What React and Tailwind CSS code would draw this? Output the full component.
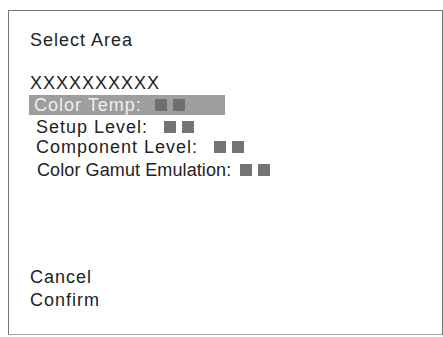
import React from "react";

const Squares = ({ dark }) => (
  <span className="inline-flex gap-[6px]">
    <span className={`inline-block w-[12px] h-[12px] ${dark ? "bg-[#6e6e6e]" : "bg-[#747474]"}`}></span>
    <span className={`inline-block w-[12px] h-[12px] ${dark ? "bg-[#6e6e6e]" : "bg-[#747474]"}`}></span>
  </span>
);

const App = () => {
  return (
    <div className="w-[443px] h-[337px] bg-white pt-[10px] pl-[8px] overflow-hidden font-['Liberation_Sans',Arial,sans-serif] text-[18px] tracking-[1px] text-[#222]">
      <div className="w-[435px] h-[325px] border border-[#777] border-b-[#aaa] pl-[21px] pt-[18px]">
        {/* Title */}
        <div className="h-[22px] leading-[22px]">Select Area</div>

        {/* Area name */}
        <div className="mt-[21px] h-[22px] leading-[22px]">XXXXXXXXXX</div>

        {/* Selected item */}
        <div className="mt-px w-[196px] h-[20px] leading-[20px] bg-[#9e9e9e] text-[#eeeeee] pl-[5px] -ml-px">
          Color Temp:<span className="ml-[13px]"><Squares dark /></span>
        </div>

        <div className="mt-[2px] pl-[6px] h-[20px] leading-[20px]">
          Setup Level:<span className="ml-[16px]"><Squares /></span>
        </div>
        <div className="pl-[6px] h-[20px] leading-[20px]">
          Component Level:<span className="ml-[16px]"><Squares /></span>
        </div>
        <div className="mt-[3px] pl-[7px] h-[20px] leading-[20px] tracking-[0.1px]">
          Color Gamut Emulation:<span className="ml-[9px]"><Squares /></span>
        </div>

        {/* Actions */}
        <div className="mt-[87px] h-[20px] leading-[20px]">Cancel</div>
        <div className="mt-[3px] h-[20px] leading-[20px]">Confirm</div>
      </div>
    </div>
  );
};

export default App;
